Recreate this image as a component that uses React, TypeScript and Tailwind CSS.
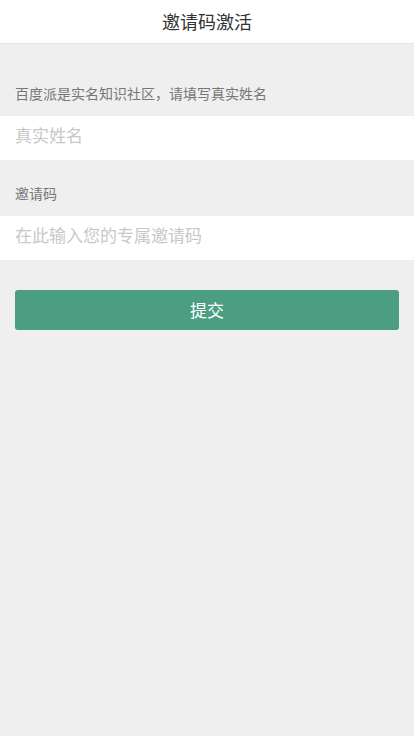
export default function App() {
  return (
    <div
      className="min-h-[736px] bg-[#efefef]"
      style={{ fontFamily: '"Noto Sans CJK SC", "Liberation Sans", sans-serif' }}
    >
      <header className="flex h-[44px] items-center justify-center border-b border-[#e3e3e3] bg-white">
        <h1 className="text-[18px] font-normal text-[#333]">邀请码激活</h1>
      </header>

      <div className="px-[15px] pb-[12px] pt-[38px] text-[14px] leading-[22px] text-[#777]">
        百度派是实名知识社区，请填写真实姓名
      </div>
      <input
        type="text"
        placeholder="真实姓名"
        className="block h-[44px] w-full bg-white px-[15px] pb-[7px] text-[17px] text-[#333] outline-none placeholder:text-[#c8c8c8]"
      />

      <div className="px-[15px] pb-[12px] pt-[22px] text-[14px] leading-[22px] text-[#777]">
        邀请码
      </div>
      <input
        type="text"
        placeholder="在此输入您的专属邀请码"
        className="block h-[44px] w-full bg-white px-[15px] pb-[7px] text-[17px] text-[#333] outline-none placeholder:text-[#c8c8c8]"
      />

      <div className="px-[15px] pt-[30px]">
        <button
          type="button"
          className="h-[40px] w-full rounded-[3px] bg-[#4b9e81] text-[17px] text-white"
        >
          提交
        </button>
      </div>
    </div>
  );
}
